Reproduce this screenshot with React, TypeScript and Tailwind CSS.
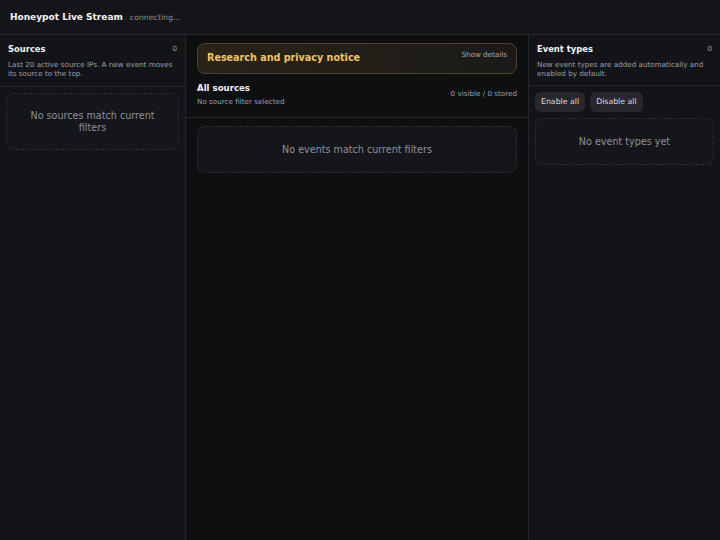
import React from 'react';

const font = "font-['DejaVu_Sans',sans-serif]";

const EmptyBox: React.FC<{ text: string; className?: string }> = ({ text, className = '' }) => (
  <div className={`rounded-[8px] border border-dashed border-[#2c2e34] bg-[#15161a] text-center text-[9.6px] leading-[12px] text-[#8d929b] ${className}`}>
    {text}
  </div>
);

const PanelHeader: React.FC<{ title: string; count: number; desc: string }> = ({ title, count, desc }) => (
  <div className="border-b border-[#25272c] px-[8px] pt-[8px] pb-[8px]">
    <div className="flex items-center justify-between">
      <h2 className="text-[8.4px] leading-[12px] font-bold text-[#f3f4f6]">{title}</h2>
      <span className="text-[7.2px] text-[#9ca3af]">{count}</span>
    </div>
    <p className="mt-[5px] text-[7.2px] leading-[9px] text-[#9aa0aa]">{desc}</p>
  </div>
);

export default function App() {
  return (
    <div className={`h-screen w-full flex flex-col bg-[#0e0f11] ${font}`}>
      <header className="h-[35px] shrink-0 flex items-baseline gap-[7px] px-[10px] pt-[11px] border-b border-[#25272c] bg-[#141519]">
        <h1 className="text-[9px] font-bold text-[#f5f6f8]">Honeypot Live Stream</h1>
        <span className="text-[7.8px] text-[#8b9099]">connecting...</span>
      </header>

      <main className="flex flex-1 min-h-0">
        <aside className="w-[186px] shrink-0 border-r border-[#25272c] bg-[#131418]">
          <PanelHeader
            title="Sources"
            count={0}
            desc="Last 20 active source IPs. A new event moves its source to the top."
          />
          <div className="px-[6px] pt-[6px]">
            <EmptyBox text="No sources match current filters" className="px-[14px] py-[15.5px]" />
          </div>
        </aside>

        <section className="flex-1 min-w-0 flex flex-col">
          <div className="border-b border-[#25272c] px-[11px] pt-[8px] pb-[11px]">
            <div className="h-[31px] rounded-[8px] border border-[#4d4230] bg-gradient-to-r from-[#2a2418] to-[#1b1a18] flex items-start justify-between px-[9px]">
              <span className="mt-[7px] text-[9.6px] leading-[13px] font-bold text-[#f3c45e]">Research and privacy notice</span>
              <span className="mt-[6px] text-[7.2px] leading-[10px] text-[#a6a9ae]">Show details</span>
            </div>
            <div className="mt-[8px] flex items-center justify-between">
              <div>
                <h2 className="text-[8.6px] leading-[12px] font-bold text-[#f3f4f6]">All sources</h2>
                <p className="mt-[3px] text-[7.2px] leading-[9px] text-[#9aa0aa]">No source filter selected</p>
              </div>
              <span className="text-[7.2px] text-[#9ca3af]">0 visible / 0 stored</span>
            </div>
          </div>
          <div className="px-[11px] pt-[8px]">
            <EmptyBox text="No events match current filters" className="py-[16.5px]" />
          </div>
        </section>

        <aside className="w-[192px] shrink-0 border-l border-[#25272c] bg-[#131418]">
          <div className="border-b border-[#25272c] px-[8px] pt-[8px] pb-[7px]">
            <div className="flex items-center justify-between">
              <h2 className="text-[8.4px] leading-[12px] font-bold text-[#f3f4f6]">Event types</h2>
              <span className="text-[7.2px] text-[#9ca3af]">0</span>
            </div>
            <p className="mt-[5px] text-[7.2px] leading-[9px] text-[#9aa0aa]">
              New event types are added automatically and enabled by default.
            </p>
          </div>
          <div className="px-[6px] pt-[6px]">
            <div className="flex gap-[5px]">
              <button className="h-[20px] rounded-[6px] bg-[#26282d] px-[6px] text-[7.8px] font-medium text-[#dcdee2]">Enable all</button>
              <button className="h-[20px] rounded-[6px] bg-[#26282d] px-[6px] text-[7.8px] font-medium text-[#dcdee2]">Disable all</button>
            </div>
            <EmptyBox text="No event types yet" className="mt-[6px] py-[16.5px]" />
          </div>
        </aside>
      </main>
    </div>
  );
}
